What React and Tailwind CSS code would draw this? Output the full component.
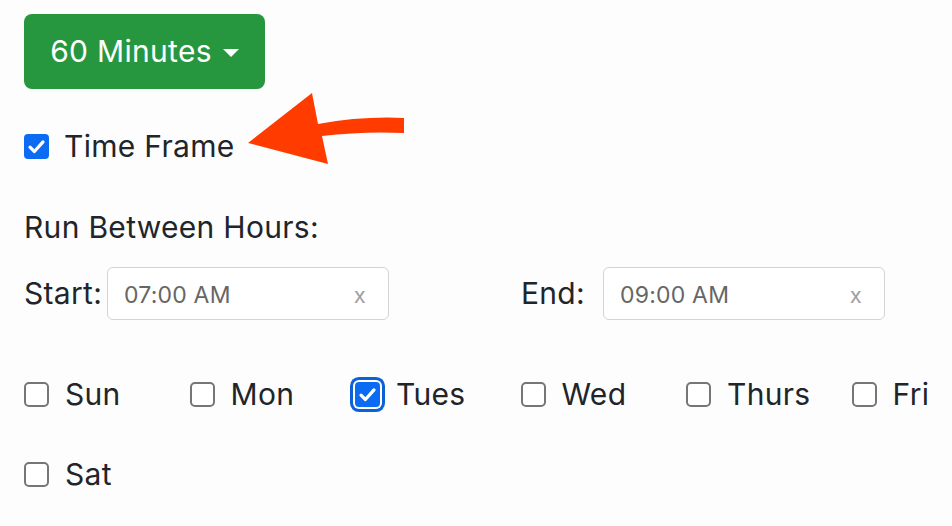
import React from "react";

const DAYS = [
  { label: "Sun", checked: false },
  { label: "Mon", checked: false },
  { label: "Tues", checked: true, focused: true },
  { label: "Wed", checked: false },
  { label: "Thurs", checked: false },
  { label: "Fri", checked: false },
];

function Check({ checked, focused }) {
  if (checked) {
    return (
      <span
        className={
          "flex h-[25px] w-[25px] shrink-0 items-center justify-center rounded-[4px] bg-[#0b6bf2] " +
          (focused ? "ring-[3px] ring-[#0b62d6] ring-offset-[2px] ring-offset-white" : "")
        }
      >
        <svg viewBox="0 0 25 25" className="h-[25px] w-[25px]">
          <path
            d="M6 13.2l4.4 4.3 8.6-9.6"
            fill="none"
            stroke="white"
            strokeWidth="3.2"
            strokeLinecap="round"
            strokeLinejoin="round"
          />
        </svg>
      </span>
    );
  }
  return (
    <span className="h-[25px] w-[25px] shrink-0 rounded-[5px] border-2 border-[#767676] bg-white" />
  );
}

function TimeInput({ value }) {
  return (
    <div className="flex h-[53px] w-[282px] items-center justify-between rounded-[6px] border-[1.5px] border-[#d4d4d6] bg-white pl-[16px] pr-[22px] pt-[4px]">
      <span className="text-[23px] tracking-[0.2px] text-[#666]">{value}</span>
      <span className="text-[22px] text-[#a0a0a0]">x</span>
    </div>
  );
}

export default function App() {
  return (
    <div
      className="relative h-[526px] w-[952px] overflow-hidden bg-[#fdfdfd] pl-[24px] pt-[14px] text-[30px] tracking-[0.3px] text-[#212529]"
      style={{ fontFamily: "Inter, 'Liberation Sans', sans-serif" }}
    >
      <button className="flex h-[75px] w-[241px] items-center justify-center gap-[11px] rounded-[8px] bg-[#26973f] text-white">
        <span>60 Minutes</span>
        <span className="mt-[2px] h-0 w-0 border-x-[8px] border-t-[8px] border-x-transparent border-t-white" />
      </button>

      <div className="mt-[37px] flex h-[40px] items-center gap-[15px]">
        <Check checked />
        <span>Time Frame</span>
      </div>

      <div className="mt-[41px] flex h-[40px] items-center">Run Between Hours:</div>

      <div className="mt-[20px] flex h-[53px] items-center">
        <div className="flex w-[497px] items-center">
          <span className="w-[83px]">Start:</span>
          <TimeInput value="07:00 AM" />
        </div>
        <div className="flex items-center">
          <span className="w-[82px]">End:</span>
          <TimeInput value="09:00 AM" />
        </div>
      </div>

      <div className="mt-[54px] flex h-[40px] w-[1000px] items-center">
        {DAYS.map((d) => (
          <div key={d.label} className="flex w-[165.5px] shrink-0 items-center gap-[16px]">
            <Check checked={d.checked} focused={d.focused} />
            <span>{d.label}</span>
          </div>
        ))}
      </div>

      <div className="mt-[40px] flex h-[40px] items-center gap-[16px]">
        <Check />
        <span>Sat</span>
      </div>

      <svg
        className="pointer-events-none absolute left-0 top-0"
        width="952"
        height="526"
        viewBox="0 0 952 526"
      >
        <path
          d="M248 143 L312 93 L318 124 Q362 116 404 118 L404 133 Q364 131 322 136 L328 164 Z"
          fill="#ff3b00"
        />
      </svg>
    </div>
  );
}
